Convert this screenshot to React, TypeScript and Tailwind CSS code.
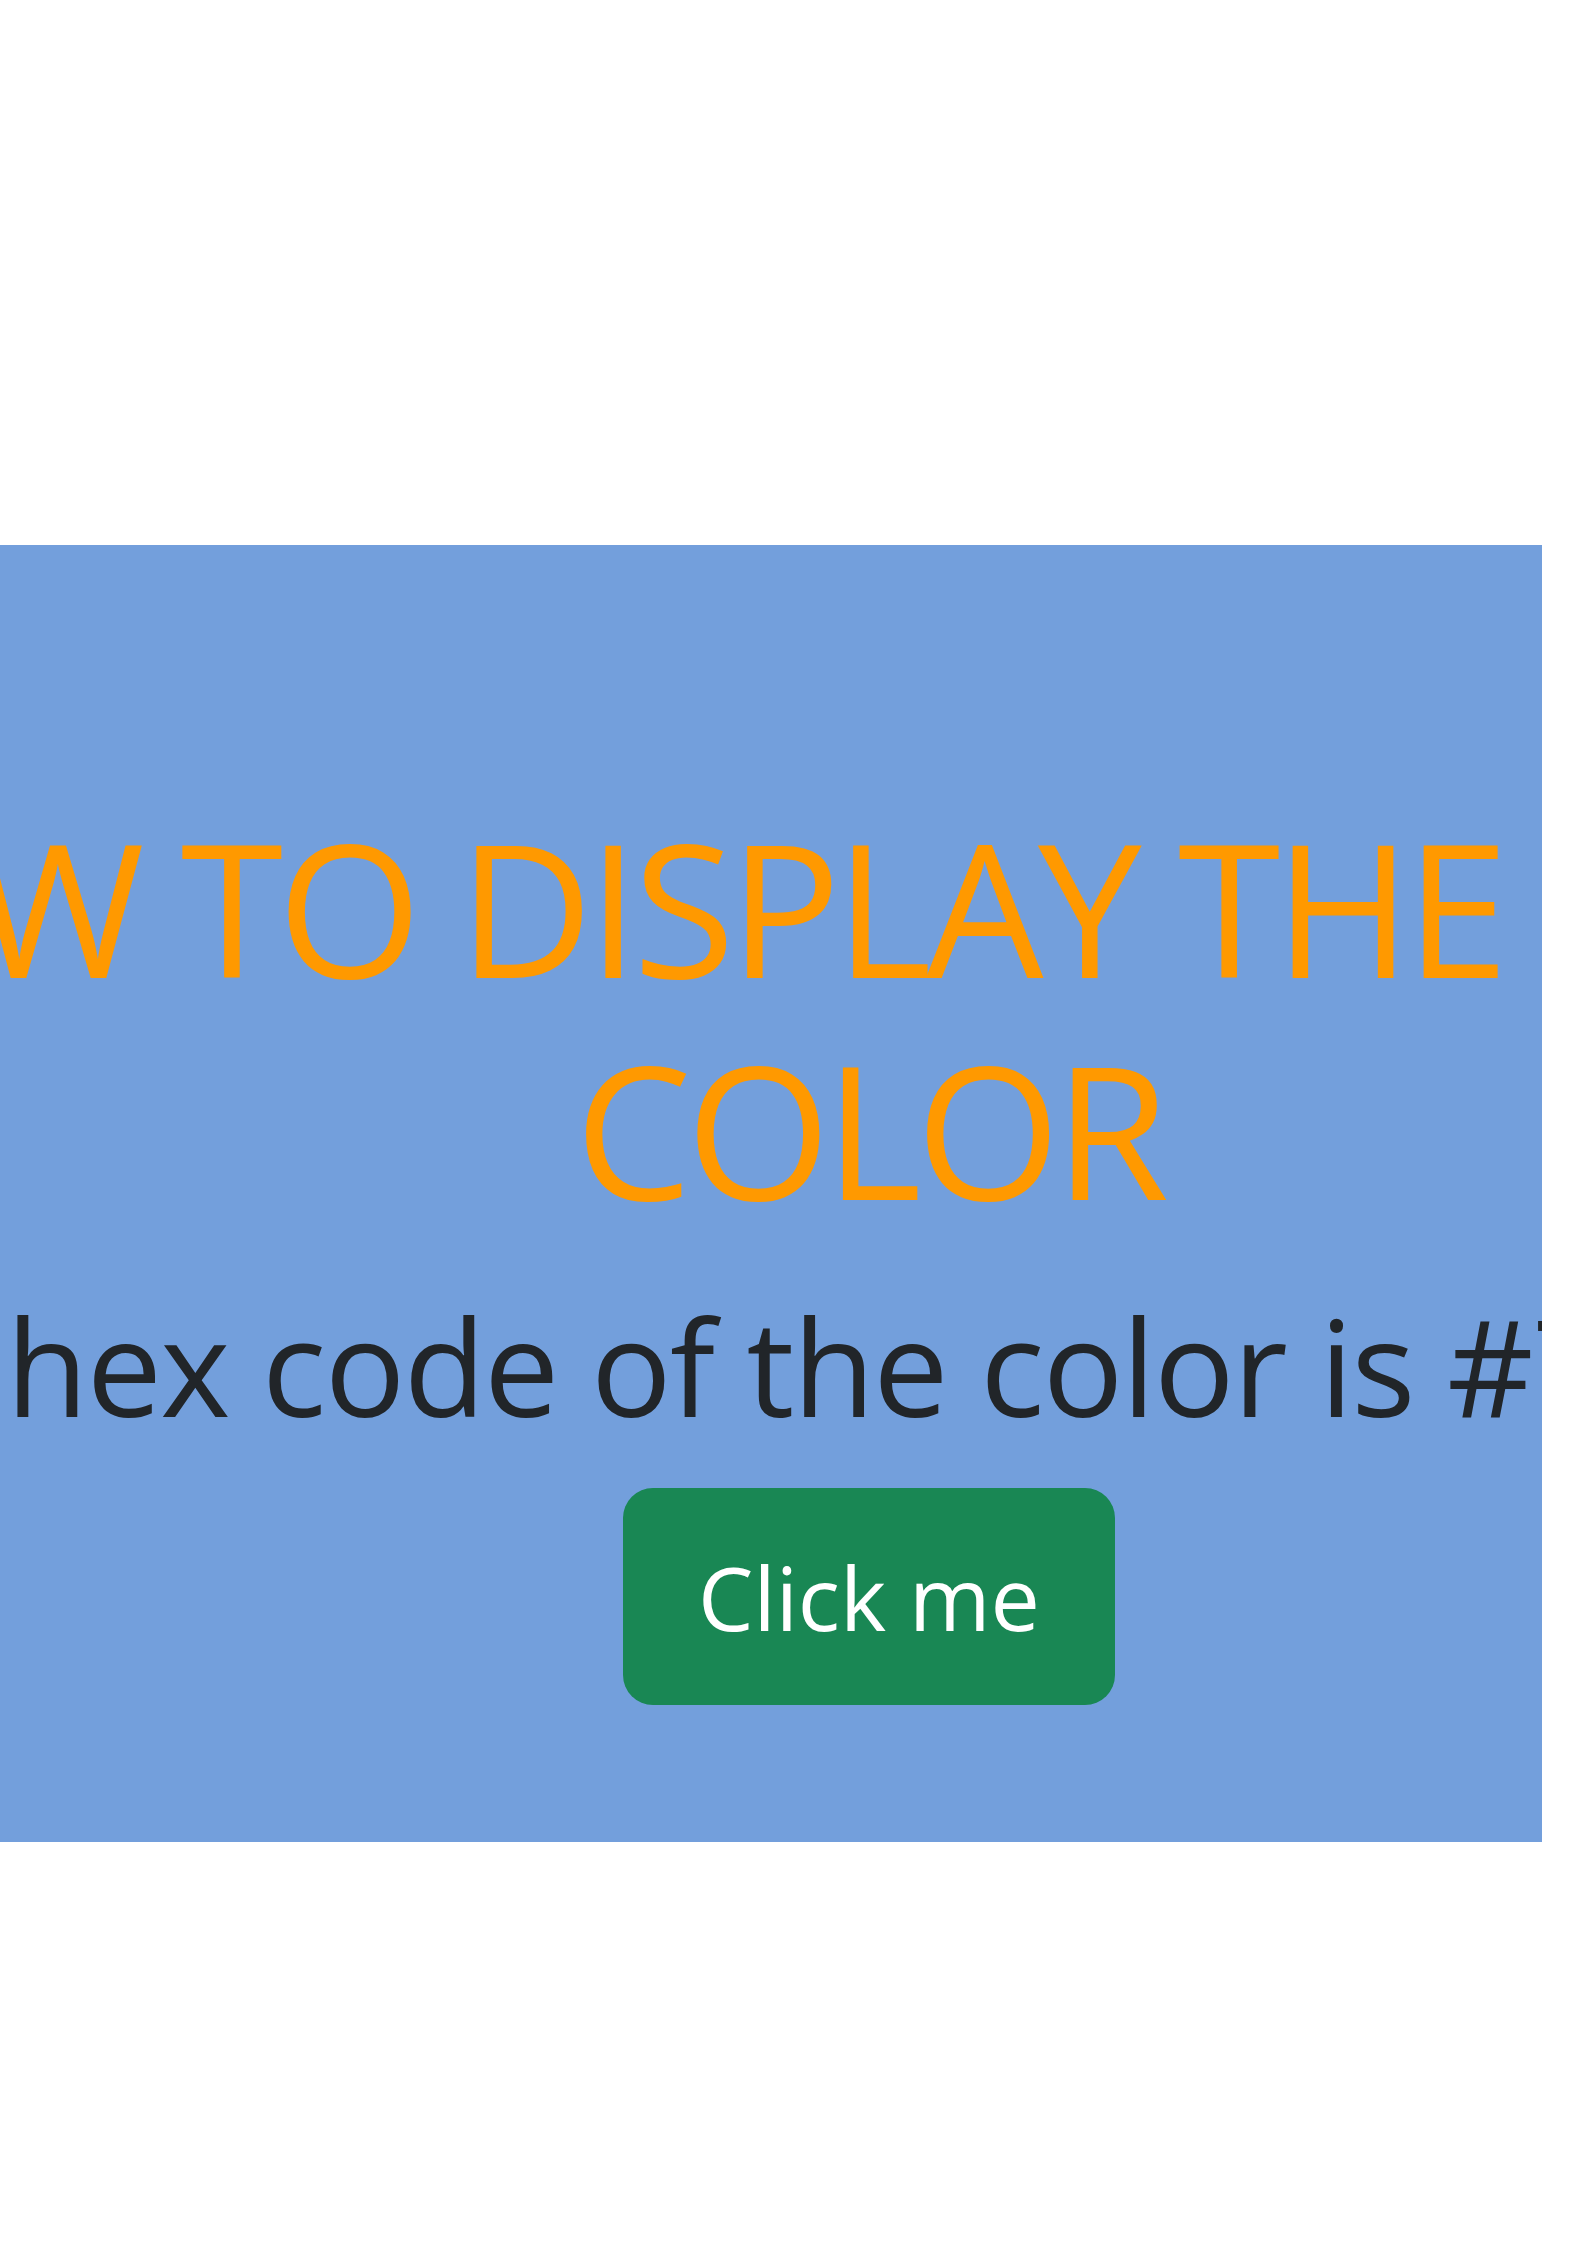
import { useState } from "react";

const App = () => {
  const [hex, setHex] = useState("739fdc");

  return (
    <div className="min-h-[2245px] w-full bg-white pt-[545px] font-['Open_Sans',sans-serif]">
      <div className="h-[1297px] w-[1542px] overflow-hidden bg-[#739fdc]">
        <div className="flex w-[1738px] flex-col items-center pt-[250px]">
          <h2 className="flex flex-col items-center text-[186px] font-normal leading-[222px] tracking-[-6px] text-[#ff9900]">
            <span className="-ml-[160px] whitespace-nowrap">HOW TO DISPLAY THE HEX</span>
            <span className="whitespace-nowrap">COLOR</span>
          </h2>
          <p className="-ml-[48px] mt-[26px] whitespace-nowrap text-[134px] leading-[201px] tracking-[-1.6px] text-[#212529]">
            The hex code of the color is #{hex}
          </p>
          <button
            className="mt-[22px] h-[217px] w-[492px] rounded-[30px] bg-[#198754] text-[88px] leading-[132px] text-white"
            onClick={() => setHex("739fdc")}
          >
            Click me
          </button>
        </div>
      </div>
    </div>
  );
};

export default App;
